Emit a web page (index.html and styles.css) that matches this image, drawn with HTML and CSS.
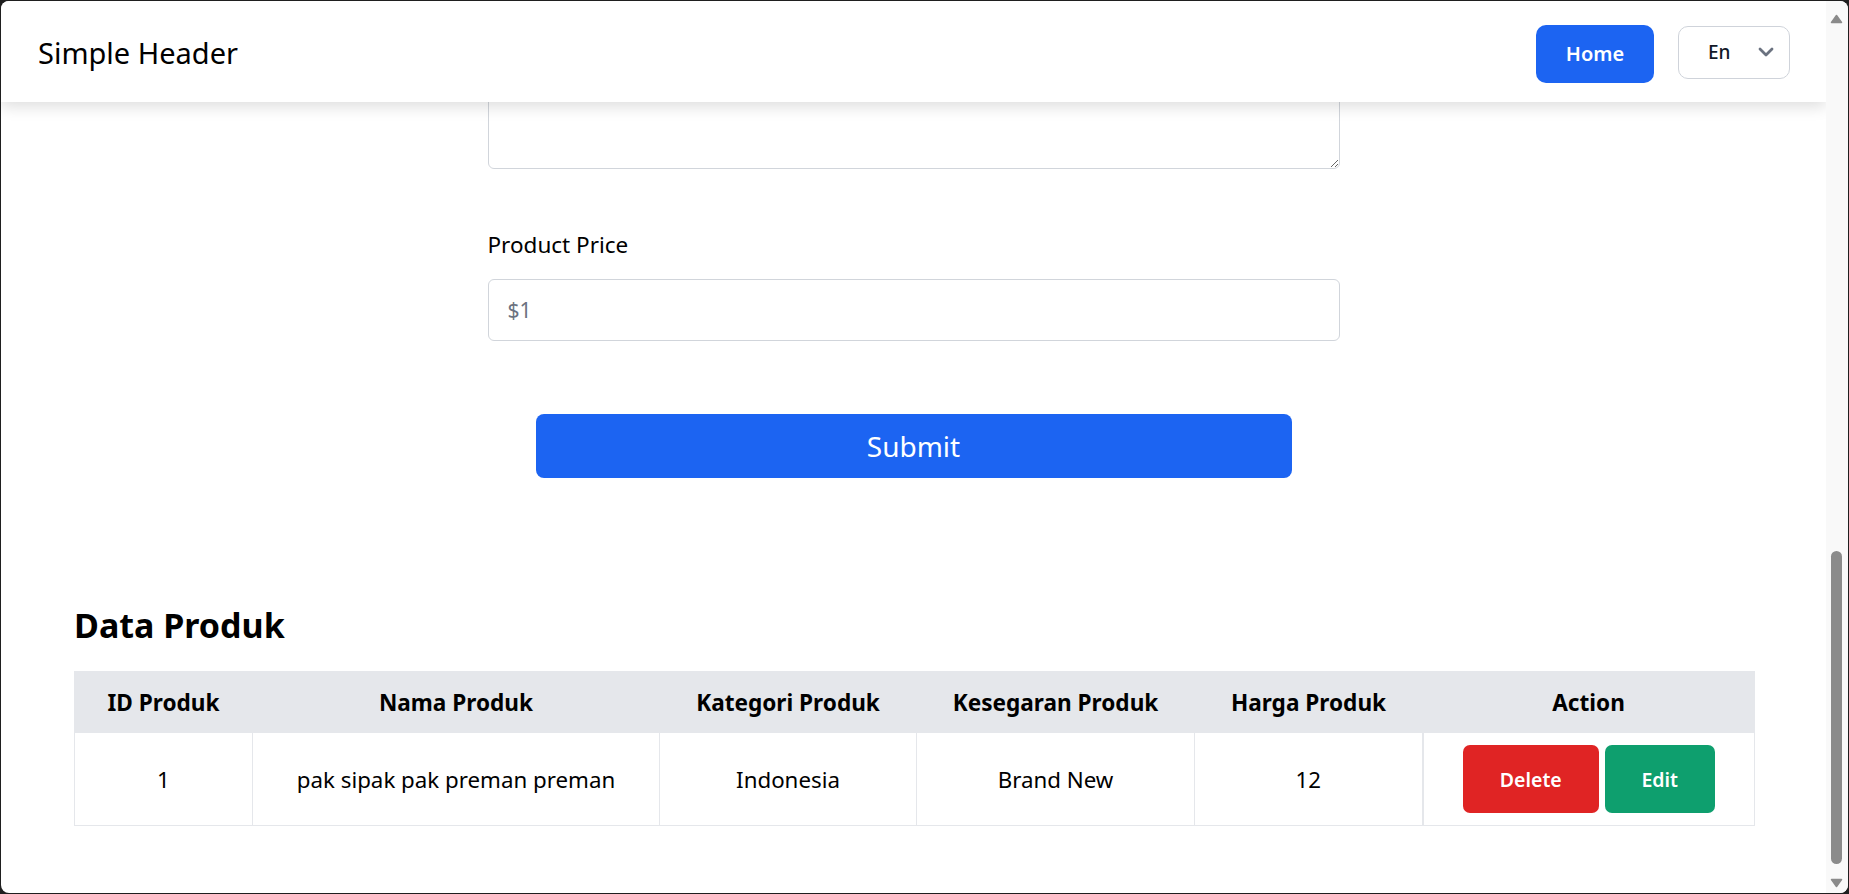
FILE: index.html
```html
<!DOCTYPE html>
<html lang="id">
<head>
<meta charset="utf-8">
<title>Simple Header</title>
<link rel="stylesheet" href="styles.css">
</head>
<body>
<div class="window">
  <div class="page">
    <header class="topbar">
      <div class="brand">Simple Header</div>
      <nav class="nav">
        <button class="btn-home" type="button">Home</button>
        <div class="lang">
          <span class="lang-text">En</span>
          <svg class="chevron" width="16" height="10" viewBox="0 0 16 10" aria-hidden="true">
            <path d="M2 2 L8 8 L14 2" fill="none" stroke="#6b7280" stroke-width="2.8" stroke-linecap="round" stroke-linejoin="round"/>
          </svg>
        </div>
      </nav>
    </header>
    <main class="content">
      <form class="product-form">
        <textarea class="field-area"></textarea>
        <label class="field-label" for="price">Product Price</label>
        <input class="field-input" id="price" type="text" placeholder="$1">
        <button class="btn-submit" type="button">Submit</button>
      </form>
      <section class="data">
        <h2 class="data-title">Data Produk</h2>
        <table class="data-table">
          <colgroup>
            <col class="c1"><col class="c2"><col class="c3"><col class="c4"><col class="c5"><col class="c6">
          </colgroup>
          <thead>
            <tr>
              <th>ID Produk</th>
              <th>Nama Produk</th>
              <th>Kategori Produk</th>
              <th>Kesegaran Produk</th>
              <th>Harga Produk</th>
              <th>Action</th>
            </tr>
          </thead>
          <tbody>
            <tr>
              <td>1</td>
              <td>pak sipak pak preman preman</td>
              <td>Indonesia</td>
              <td>Brand New</td>
              <td>12</td>
              <td class="action-cell">
                <div class="actions">
                  <button class="btn-delete" type="button">Delete</button>
                  <button class="btn-edit" type="button">Edit</button>
                </div>
              </td>
            </tr>
          </tbody>
        </table>
      </section>
    </main>
  </div>
  <div class="scrollbar">
    <svg class="arrow" width="13" height="10" viewBox="0 0 13 10" aria-hidden="true">
      <path d="M6.5 1.5 L11.5 8.5 L1.5 8.5 Z" fill="#8a8a8a" stroke="#8a8a8a" stroke-width="1.5" stroke-linejoin="round"/>
    </svg>
    <div class="track"><div class="thumb"></div></div>
    <svg class="arrow" width="13" height="10" viewBox="0 0 13 10" aria-hidden="true">
      <path d="M1.5 1.5 L11.5 1.5 L6.5 8.5 Z" fill="#8a8a8a" stroke="#8a8a8a" stroke-width="1.5" stroke-linejoin="round"/>
    </svg>
  </div>
</div>
</body>
</html>
```

FILE: styles.css
```css
* {
  box-sizing: border-box;
  margin: 0;
  padding: 0;
}

html, body {
  height: 100%;
}

body {
  background: #1f1f1f;
  padding: 1px;
  font-family: "Noto Sans", "Open Sans", sans-serif;
  color: #000;
  overflow: hidden;
}

.window {
  display: flex;
  height: 892px;
  background: #fff;
  border-radius: 8px;
  overflow: hidden;
}

.page {
  flex: 1;
  position: relative;
  overflow: hidden;
}

/* fixed header lies over the scrolled content */
.topbar {
  position: absolute;
  top: 0;
  left: 0;
  right: 0;
  height: 101px;
  padding: 2px 36px 0 37px;
  background: #fff;
  display: flex;
  align-items: center;
  justify-content: space-between;
  box-shadow: 0 5px 14px rgba(0, 0, 0, 0.13);
  z-index: 10;
}

.brand {
  font-size: 29px;
  line-height: 40px;
  color: #000;
}

.nav {
  display: flex;
  align-items: center;
  gap: 24px;
}

.btn-home {
  width: 118px;
  height: 58px;
  border: 0;
  border-radius: 10px;
  background: #1c64f2;
  color: #fff;
  font-family: "Noto Sans", sans-serif;
  font-size: 20px;
  font-weight: 600;
  margin-top: 2px;
}

.lang {
  width: 112px;
  height: 53px;
  border: 1px solid #cfd3da;
  border-radius: 10px;
  display: flex;
  align-items: center;
  padding-left: 29px;
  gap: 27px;
  margin-top: -1px;
}

.lang-text {
  font-size: 19px;
  font-weight: 500;
  color: #111827;
}

.chevron {
  display: block;
}

.content {
  padding-top: 31px;
}

.product-form {
  width: 852px;
  margin: 0 auto;
  display: flex;
  flex-direction: column;
}

.field-area {
  height: 137px;
  width: 100%;
  border: 1px solid #d1d5db;
  border-radius: 6px;
  font-family: inherit;
}

.field-label {
  margin-top: 61px;
  font-size: 22.5px;
  line-height: 30px;
  color: #000;
}

.field-input {
  margin-top: 19px;
  height: 62px;
  width: 100%;
  border: 1px solid #d1d5db;
  border-radius: 6px;
  padding: 0 19px;
  font-family: inherit;
  font-size: 21px;
  color: #111827;
}

.field-input::placeholder {
  color: #6b7280;
}

.btn-submit {
  margin: 73px 48px 0;
  height: 64px;
  border: 0;
  border-radius: 8px;
  background: #1c64f2;
  color: #fff;
  font-family: inherit;
  font-size: 28px;
  font-weight: 400;
}

.data {
  padding: 0 72px 0 73px;
  margin-top: 125px;
}

.data-title {
  font-size: 34px;
  line-height: 44px;
  font-weight: 700;
}

.data-table {
  margin-top: 24px;
  width: 100%;
  table-layout: fixed;
  border-collapse: collapse;
  border: 1px solid #e5e7eb;
}

.c1 { width: 178px; }
.c2 { width: 407px; }
.c3 { width: 257px; }
.c4 { width: 278px; }
.c5 { width: 228px; }
.c6 { width: 332px; }

.data-table th {
  height: 61px;
  background: #e5e7eb;
  font-size: 22.6px;
  font-weight: 700;
  text-align: center;
  vertical-align: middle;
  border: 1px solid #e5e7eb;
}

.data-table td {
  height: 93px;
  font-size: 22.3px;
  text-align: center;
  vertical-align: middle;
  border: 1px solid #e5e7eb;
}

.data-table td.action-cell {
  border-left: 2px solid #e5e7eb;
}

.actions {
  display: flex;
  justify-content: center;
  gap: 6px;
}

.btn-delete,
.btn-edit {
  height: 68px;
  border: 0;
  border-radius: 7px;
  color: #fff;
  font-family: inherit;
  font-size: 19.5px;
  font-weight: 600;
}

.btn-delete {
  width: 136px;
  background: #e02424;
}

.btn-edit {
  width: 110px;
  background: #0e9f6e;
}

.scrollbar {
  width: 22px;
  background: #f9f9f9;
  display: flex;
  flex-direction: column;
  align-items: center;
  padding: 13px 1px 5px 0;
}

.arrow {
  display: block;
  flex: none;
}

.track {
  flex: 1;
  width: 100%;
  display: flex;
  flex-direction: column;
  justify-content: flex-end;
  align-items: center;
  padding-bottom: 14px;
}

.thumb {
  width: 11px;
  height: 313px;
  border-radius: 6px;
  background: #8b8b8b;
}
```
